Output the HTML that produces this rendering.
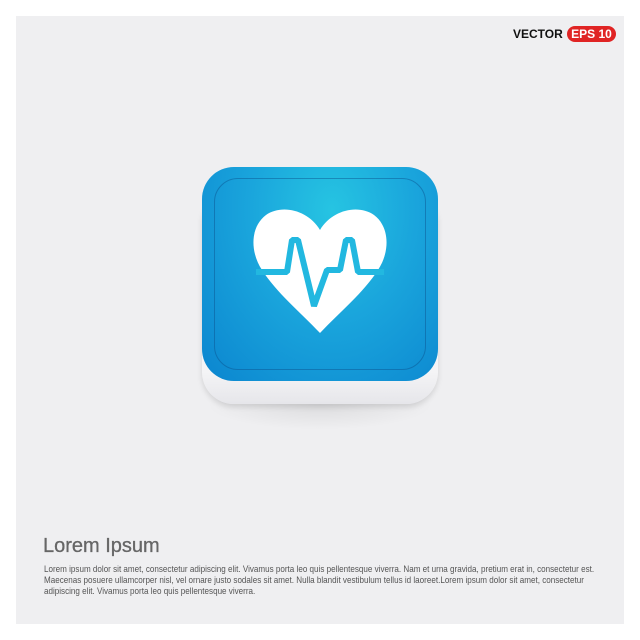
<!DOCTYPE html>
<html><head><style>
body{margin:0;width:640px;height:640px;background:#fff;position:relative;overflow:hidden;font-family:"Liberation Sans",sans-serif}
.bg{position:absolute;left:16px;top:16px;width:608px;height:608px;background:#efeff1}
.vec{position:absolute;left:513px;top:27px;font-weight:bold;font-size:12px;color:#111}
.eps{position:absolute;left:567px;top:26px;width:49px;height:16px;border-radius:8px;background:#e02424;color:#fff;font-weight:bold;font-size:12px;line-height:16px;text-align:center}
.shadow{position:absolute;left:206px;top:380px;width:228px;height:50px;border-radius:30px;background:radial-gradient(ellipse at center,rgba(0,0,0,0.08),rgba(0,0,0,0) 70%)}
.base{position:absolute;left:202px;top:190px;width:236px;height:214px;border-radius:32px;background:linear-gradient(#fff,#f4f4f6 85%,#e6e6ea);box-shadow:0 3px 6px rgba(0,0,0,0.12)}
.blue{position:absolute;left:202px;top:167px;width:236px;height:214px;border-radius:32px;background:radial-gradient(ellipse at 55% 20%,#26c4e2,#1aa5dc 45%,#0b85cf 100%)}
.inner{position:absolute;left:214px;top:178px;width:210px;height:190px;border-radius:24px;border:1px solid rgba(10,80,140,0.45)}
h1{position:absolute;left:43px;top:535px;margin:0;font-size:20px;font-weight:normal;color:#666;-webkit-text-stroke:0.3px #666}
.l{position:absolute;left:44px;white-space:nowrap;font-size:9.5px;color:#555;transform-origin:0 0;transform:scaleX(0.85)}
</style></head><body>
<div class="bg"></div>
<div class="vec">VECTOR</div><div class="eps">EPS 10</div>
<div class="shadow"></div>
<div class="base"></div>
<div class="blue"></div>
<div class="inner"></div>
<svg style="position:absolute;left:0;top:0" width="640" height="640">
<path d="M320 230 C308 210 282 204 266 215 C250 227 250 252 262 270 C276 292 300 312 320 333 C340 312 364 292 378 270 C390 252 390 227 374 215 C358 204 332 210 320 230 Z" fill="#fff"/>
<polyline points="256,272 287,272 292,240 298,240 314,306 327,270 340,270 346,240 352,240 358,272 384,272" fill="none" stroke="#22b8e0" stroke-width="6" stroke-linejoin="bevel"/>
</svg>
<h1>Lorem Ipsum</h1>
<div class="l" style="top:564px">Lorem ipsum dolor sit amet, consectetur adipiscing elit. Vivamus porta leo quis pellentesque viverra. Nam et urna gravida, pretium erat in, consectetur est.</div>
<div class="l" style="top:575px">Maecenas posuere ullamcorper nisl, vel ornare justo sodales sit amet. Nulla blandit vestibulum tellus id laoreet.Lorem ipsum dolor sit amet, consectetur</div>
<div class="l" style="top:586px">adipiscing elit. Vivamus porta leo quis pellentesque viverra.</div>
</body></html>
